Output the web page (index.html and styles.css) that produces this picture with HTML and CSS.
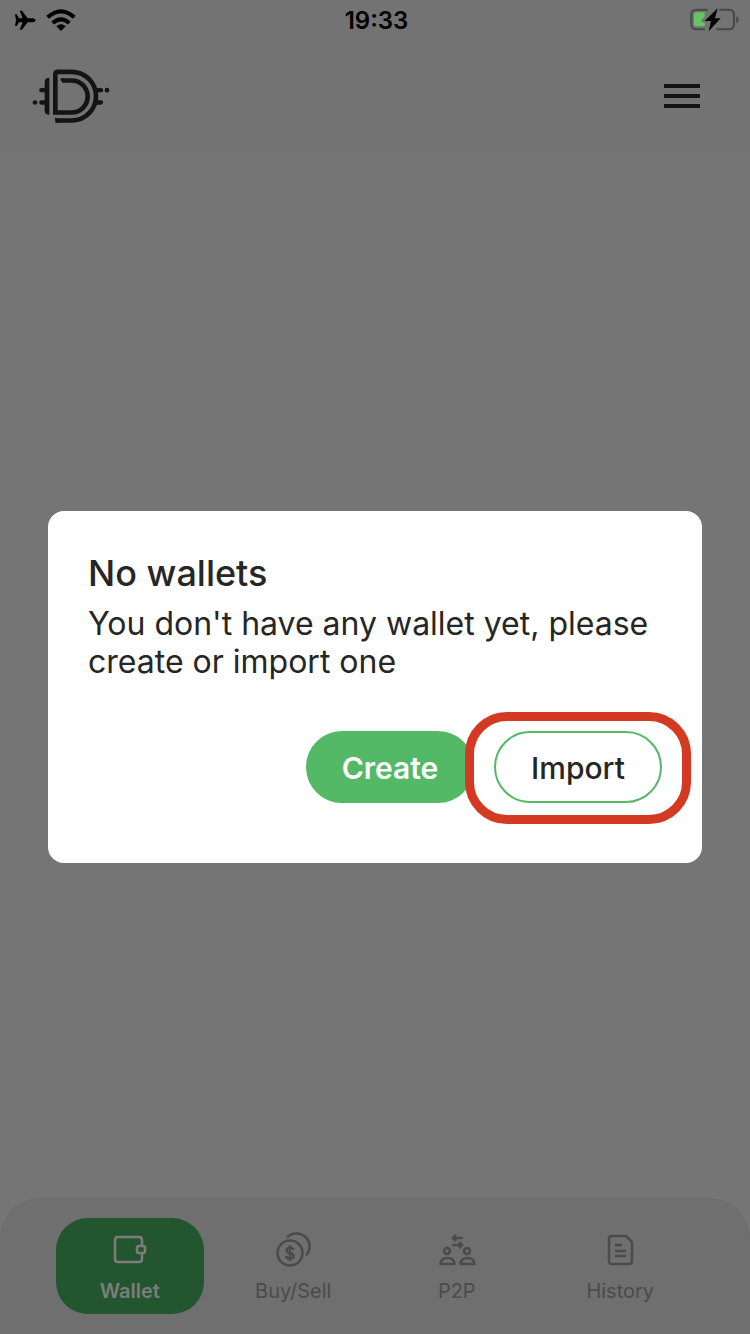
FILE: index.html
```html
<!DOCTYPE html>
<html lang="en">
<head>
<meta charset="utf-8">
<meta name="viewport" content="width=device-width, initial-scale=1">
<title>Wallet</title>
<link rel="stylesheet" href="styles.css">
</head>
<body>
<div class="app">
  <header class="top">
    <div class="status">
      <div class="status-left">
        <svg class="plane" viewBox="0 0 66 60" aria-hidden="true"><path d="M3 13H8L15 25H26L17 2H24L41 25H57Q65 26 65 31Q65 36 57 37H41L24 59H17L26 37H15L8 48H3L6 31Z"/></svg>
        <svg class="wifi" viewBox="0 0 90 66" aria-hidden="true"><path d="M45 66L31 52Q45 40 59 52Z"/><path class="wave" d="M20 42Q45 20 70 42M5 25Q45-11 85 25"/></svg>
      </div>
      <time class="clock">19:33</time>
      <svg class="battery" viewBox="0 0 150 72" aria-hidden="true">
        <path class="shell" d="M57 5H22Q7 5 7 20V49Q7 64 22 64H47M91 5H120Q135 5 135 20V49Q135 64 120 64H82"/>
        <path class="tip" d="M142 24Q149 28 149 35Q149 42 142 46Z"/>
        <path class="charge" d="M22 13H47V26L37 36Q35 42 47 44V55H22Q15 55 15 48V20Q15 13 22 13Z"/>
        <path d="M86 1L47 39H66L59 70L95 31H78Z"/>
      </svg>
    </div>
    <div class="bar">
      <svg class="logo" viewBox="36 36 234 171" role="img" aria-label="D wallet">
        <path class="logo-line" d="M106 195H155A73 73 0 0 0 155 49H114Q106 49 106 57V171H155A48 48 0 0 0 155 75H128"/>
        <path d="M88 67V178Q74 178 74 165V80Q74 67 88 67ZM104 188H116V202Q106 202 104 188ZM121 68H132V82Q123 80 121 68Z"/>
        <path class="stub" d="M64 104H76M64 141H76M234 104H243M230 141H243"/>
        <circle cx="45" cy="141" r="7"/><circle cx="261" cy="104" r="7"/>
      </svg>
      <button class="menu" type="button" aria-label="Menu"><span></span><span></span><span></span></button>
    </div>
  </header>

  <main class="stage">
    <section class="dialog" role="dialog" aria-labelledby="dialog-title">
      <h1 class="title" id="dialog-title">No wallets</h1>
      <p class="message">You don't have any wallet yet, please create or import one</p>
      <div class="actions">
        <button class="btn btn-fill" type="button">Create</button>
        <div class="marked"><button class="btn btn-line" type="button">Import</button></div>
      </div>
    </section>
  </main>

  <nav class="tabs">
    <a class="tab active" href="#wallet">
      <svg class="icon" viewBox="0 0 40 40" aria-hidden="true"><path d="M32 15V10Q32 7 29 7H8Q5 7 5 10V29Q5 32 8 32H29Q32 32 32 29V24"/><rect x="27" y="16" width="8" height="7" rx="2"/></svg>
      <span>Wallet</span>
    </a>
    <a class="tab" href="#buy-sell">
      <svg class="icon" viewBox="0 0 40 40" aria-hidden="true"><circle cx="17" cy="23" r="12.5"/><path d="M14 7.500A13 13 0 0 1 33 25.500"/><path d="M20.500 20Q20 18 17 18Q13.500 18 13.500 20.500Q13.500 22.500 17 23Q20.500 23.500 20.500 26Q20.500 28.500 17 28.500Q13.500 28.500 13 26M17 15V31"/></svg>
      <span>Buy/Sell</span>
    </a>
    <a class="tab" href="#p2p">
      <svg class="icon" viewBox="0 0 40 40" aria-hidden="true"><circle cx="10" cy="21" r="3"/><circle cx="30" cy="21" r="3"/><path d="M3.500 34Q4 28 10.500 28Q17 28 17.500 34ZM23.500 34Q24 28 30.500 28Q37 28 37.500 34ZM26 8H17M19 5L16 8L19 11M15 15H24M22 12L25 15L22 18"/></svg>
      <span>P2P</span>
    </a>
    <a class="tab" href="#history">
      <svg class="icon" viewBox="0 0 40 40" aria-hidden="true"><path d="M12 6H26L32 12V31Q32 34 29 34H12Q9 34 9 31V9Q9 6 12 6Z"/><path d="M15 15H22M15 21H26M15 26H26"/></svg>
      <span>History</span>
    </a>
  </nav>
</div>
</body>
</html>
```
FILE: styles.css
```css
* { box-sizing: border-box; }
body {
  margin: 0;
  background: #757575;
  color: #262626;
  font-family: Inter, "Liberation Sans", sans-serif;
}
.app { display: flex; flex-direction: column; min-height: 100vh; }
.top { background: #737373; }
.status {
  display: grid;
  grid-template-columns: 1fr auto 1fr;
  align-items: center;
  height: 40px;
  padding: 0 11px 0 14px;
  color: #000;
}
.status-left { display: flex; align-items: center; gap: 10px; }
.plane { width: 22px; height: 20px; }
.wifi { width: 30px; height: 22px; }
.wave { fill: none; stroke: #000; stroke-width: 12; }
.clock { padding-top: 2px; font-size: 24px; font-weight: 600; line-height: 38px; }
.battery { justify-self: end; width: 50px; height: 24px; }
.shell { fill: none; stroke: #484848; stroke-width: 6; }
.tip { fill: #484848; }
.charge { fill: #64c466; }
.bar {
  display: flex;
  align-items: center;
  justify-content: space-between;
  height: 112px;
  padding: 0 50px 0 32px;
}
.logo { width: 78px; height: 58px; fill: #141414; }
.logo-line { fill: none; stroke: #141414; stroke-width: 14; }
.stub { fill: none; stroke: #141414; stroke-width: 13; stroke-linecap: round; }
.menu {
  display: flex;
  flex-direction: column;
  gap: 6px;
  width: 36px;
  padding: 0;
  border: 0;
  background: none;
}
.menu span { height: 4px; background: #141414; }

.stage {
  position: fixed;
  inset: 40px 0 0;
  display: flex;
  align-items: center;
  padding: 0 48px;
}
.dialog {
  width: 100%;
  padding: 40px 40px 60px;
  border-radius: 16px;
  background: #fff;
}
.title { margin: 0 0 10px; font-size: 36px; font-weight: 500; line-height: 44px; }
.message { margin: 0 0 50px; font-size: 32px; line-height: 38px; }
.actions { display: flex; justify-content: flex-end; gap: 20px; }
.marked { position: relative; display: flex; }
.marked::after {
  content: "";
  position: absolute;
  inset: -19px -29px -21px;
  border: 9px solid #d33a21;
  border-radius: 42px;
  pointer-events: none;
}
.btn {
  width: 168px;
  height: 72px;
  padding: 2px 0 0;
  border: 2px solid #53b966;
  border-radius: 36px;
  font: 600 30px/36px Inter, "Liberation Sans", sans-serif;
}
.btn-fill { background: #53b966; color: #fff; }
.btn-line { background: #fff; color: #262626; font-weight: 500; }

.tabs {
  display: flex;
  gap: 16px;
  margin-top: auto;
  padding: 20px 56px;
  border-radius: 40px 40px 0 0;
  background: #6f6f6f;
}
.tab {
  flex: 1;
  display: flex;
  flex-direction: column;
  align-items: center;
  gap: 8px;
  height: 96px;
  padding-top: 12px;
  border-radius: 32px;
  color: #4b4b4b;
  font-size: 20px;
  line-height: 26px;
  text-decoration: none;
}
.active { background: #23562f; color: #7d7d7d; font-weight: 600; }
.icon {
  width: 40px;
  height: 40px;
  fill: none;
  stroke: currentColor;
  stroke-width: 2.5;
  stroke-linejoin: round;
}
```
